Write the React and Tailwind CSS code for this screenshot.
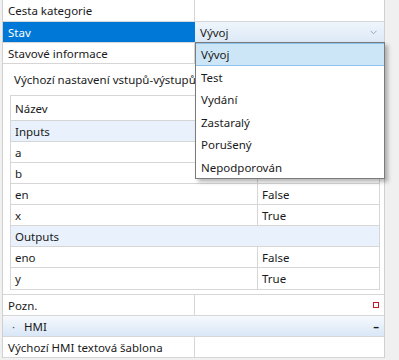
import React from "react";

const Row = ({ left, right, h = "h-[21px]" }) => (
  <div className={`flex ${h} border-b border-[#d6d6d6]`}>
    <div className="w-[192px] shrink-0 border-r border-[#d6d6d6] flex items-center pl-[5px] pt-[1px]">{left}</div>
    <div className="flex-1 flex items-center pl-[5px] pt-[1px]">{right}</div>
  </div>
);

const IRow = ({ left, right, h = "h-[21px]" }) => (
  <div className={`flex ${h} border-b border-[#d6d6d6] last:border-b-0`}>
    <div className="w-[247px] shrink-0 border-r border-[#d6d6d6] flex items-center pl-[4px] pt-[1px]">{left}</div>
    <div className="flex-1 flex items-center pl-[4px] pt-[1px]">{right}</div>
  </div>
);

const GRow = ({ label }) => (
  <div className="flex h-[21px] border-b border-[#d6d6d6] bg-[#e9f2fc] items-center pl-[4px] pt-[1px]">{label}</div>
);

export default function App() {
  const items = ["Vývoj", "Test", "Vydání", "Zastaralý", "Porušený", "Nepodporován"];
  return (
    <div className="relative w-[399px] h-[360px] overflow-hidden bg-[#f0f0f0] font-['Noto_Sans',sans-serif] text-[11.5px] leading-none text-[#1a1a1a]">
      <div className="ml-[2px] w-[383px] bg-white border-x border-[#d0d0d0]">
        <Row h="h-[22px]" left="Cesta kategorie" right="" />
        <div className="flex h-[21px] border-b border-[#d6d6d6]">
          <div className="w-[192px] shrink-0 bg-[#0078d7] text-white flex items-center pl-[5px] pt-[1px]">Stav</div>
          <div className="flex-1 flex items-center justify-between pl-[5px] pr-[7px] pt-[1px] bg-gradient-to-b from-[#eef5fc] to-[#dde9f7]">
            <span>Vývoj</span>
            <svg width="7" height="5" viewBox="0 0 7 5" fill="none">
              <path d="M0.5 0.8 L3.5 3.8 L6.5 0.8" stroke="#8aa8c8" strokeWidth="1" />
            </svg>
          </div>
        </div>
        <Row left="Stavové informace" right="" />
        <div className="border-b border-[#d6d6d6] pb-[4px]">
          <div className="h-[31px] flex items-center pl-[11px] pt-[1px]">Výchozí nastavení vstupů-výstupů</div>
          <div className="ml-[7px] w-[370px] border border-[#d6d6d6]">
            <IRow h="h-[25px]" left="Název" right="Hodnota" />
            <GRow label="Inputs" />
            <IRow left="a" right="False" />
            <IRow left="b" right="True" />
            <IRow left="en" right="False" />
            <IRow left="x" right="True" />
            <GRow label="Outputs" />
            <IRow left="eno" right="False" />
            <IRow left="y" right="True" />
          </div>
        </div>
        <div className="flex h-[21px] border-b border-[#d6d6d6]">
          <div className="w-[192px] shrink-0 border-r border-[#d6d6d6] flex items-center pl-[5px] pt-[1px]">Pozn.</div>
          <div className="flex-1 flex items-center justify-end pr-[5px]">
            <div className="w-[6px] h-[6px] border-[1.5px] border-[#c41a2a]" />
          </div>
        </div>
        <div className="flex h-[21px] border-b border-[#d6d6d6] items-center pt-[1px] bg-gradient-to-b from-[#f6f9fd] to-[#d9e7f7]">
          <span className="pl-[9px] w-[21px] text-[#555]">·</span>
          <span className="flex-1">HMI</span>
          <span className="pr-[5px] font-bold">–</span>
        </div>
        <Row left="Výchozí HMI textová šablona" right="" />
      </div>

      <div className="absolute left-[195px] top-[42px] w-[190px] border border-[#7b7b7b] bg-white shadow-[3px_3px_4px_rgba(0,0,0,0.28)]">
        {items.map((it, i) => (
          <div
            key={it}
            className={`h-[22.5px] flex items-center pl-[5px] pt-[1px] ${i === 0 ? "bg-[#cde6f7] border-y border-[#8cc2ec]" : ""}`}
          >
            {it}
          </div>
        ))}
      </div>
    </div>
  );
}
